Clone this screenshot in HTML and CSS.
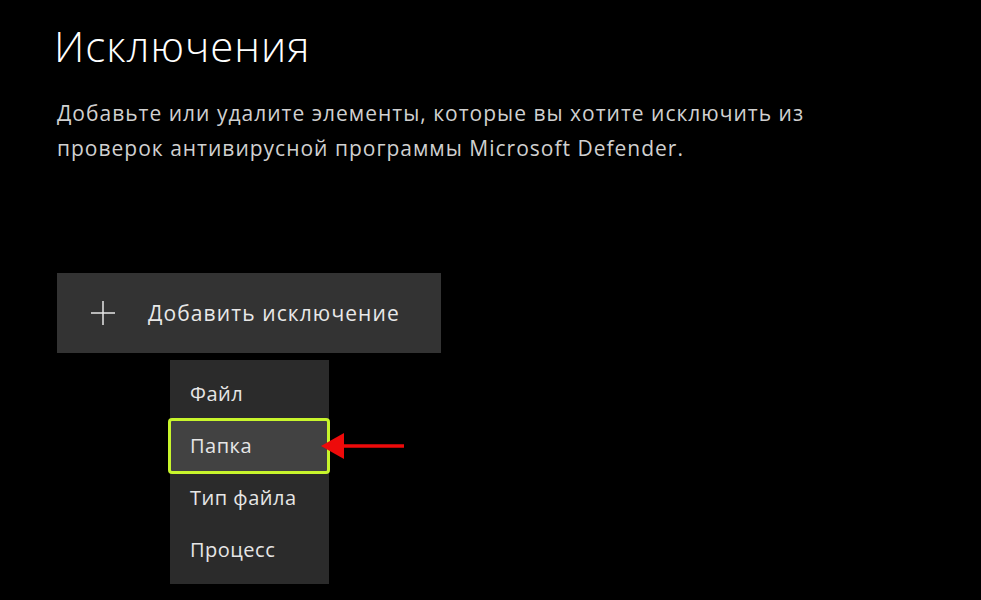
FILE: index.html
```html
<!DOCTYPE html>
<html lang="ru">
<head>
<meta charset="utf-8">
<link rel="stylesheet" href="styles.css">
</head>
<body>
<main class="page">
  <h1 class="title">Исключения</h1>
  <p class="desc">Добавьте или удалите элементы, которые вы хотите исключить из<br>проверок антивирусной программы Microsoft Defender.</p>
  <button class="add-btn">
    <svg class="plus" width="26" height="26" viewBox="0 0 26 26"><path d="M13 1V25M1 13H25" stroke="#e6e6e6" stroke-width="1.5" fill="none"/></svg>
    <span>Добавить исключение</span>
  </button>
  <div class="menu-wrap">
    <ul class="menu">
      <li class="item">Файл</li>
      <li class="item active">Папка</li>
      <li class="item">Тип файла</li>
      <li class="item">Процесс</li>
    </ul>
    <svg class="arrow" width="90" height="30" viewBox="0 0 90 30"><path d="M27 13.2H88V16.8H27Z" fill="#ee0a0a"/><path d="M5 15L28 2V28Z" fill="#ee0a0a"/></svg>
  </div>
</main>
</body>
</html>
```
FILE: styles.css
```css
html, body {
  margin: 0;
  padding: 0;
  background: #000;
  height: 100%;
  overflow: hidden;
}
.page {
  font-family: "Open Sans", "Noto Sans", sans-serif;
  color: #fff;
  padding: 0 0 0 55px;
  display: flex;
  flex-direction: column;
  align-items: flex-start;
}
.title {
  font-weight: 300;
  font-size: 42px;
  line-height: 56px;
  margin: 18px 0 0 -1px;
  color: #fff;
  letter-spacing: 1px;
}
.desc {
  font-size: 21px;
  line-height: 35px;
  color: #d0d0d0;
  margin: 22px 0 0 2px;
  font-weight: 400;
  letter-spacing: 1px;
}
.add-btn {
  margin: 107px 0 0 2px;
  width: 384px;
  height: 80px;
  background: #333333;
  border: none;
  display: flex;
  align-items: center;
  padding: 0 0 0 33px;
  font-family: inherit;
  font-size: 21px;
  letter-spacing: 1.1px;
  color: #e8e8e8;
  gap: 32px;
  cursor: pointer;
}
.menu-wrap {
  position: relative;
  margin: 7px 0 0 115px;
}
.menu {
  list-style: none;
  margin: 0;
  padding: 8px 0;
  width: 159px;
  background: #2b2b2b;
}
.item {
  height: 52px;
  line-height: 52px;
  padding-left: 20px;
  font-size: 20px;
  letter-spacing: 0.5px;
  color: #e6e6e6;
  box-sizing: border-box;
}
.item.active {
  height: 56px;
  line-height: 50px;
  margin: -2px -1px -2px -2px;
  padding-left: 19px;
  border: 3px solid #c8f52c;
  border-radius: 4px;
  background: #424242;
}
.arrow {
  position: absolute;
  left: 146px;
  top: 71px;
}
```
